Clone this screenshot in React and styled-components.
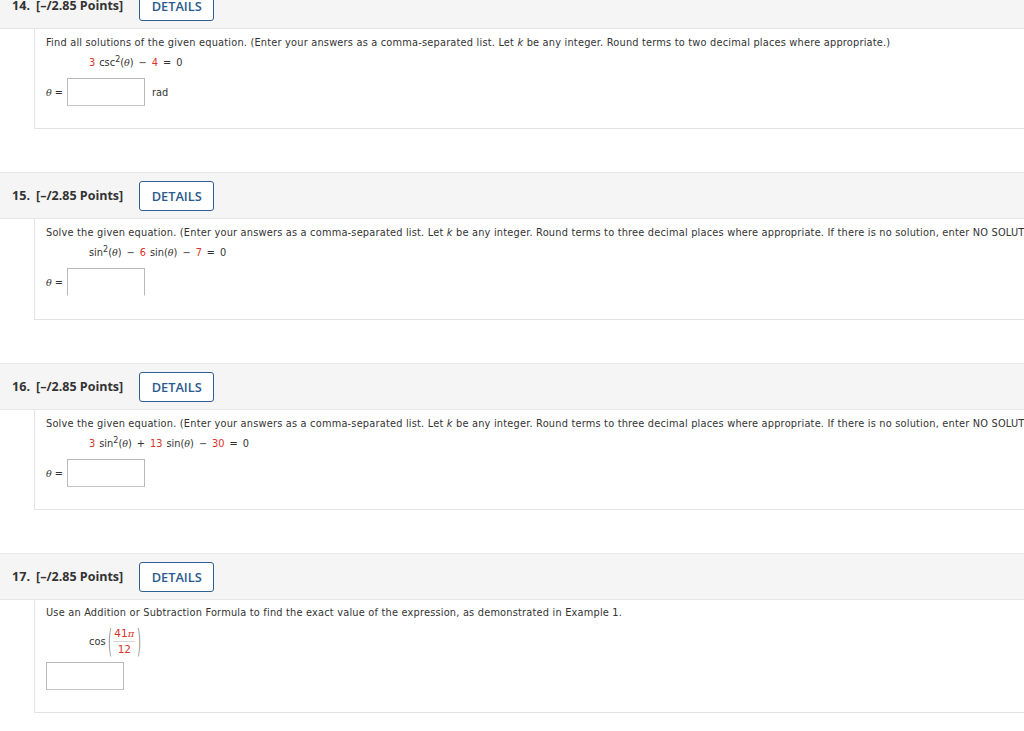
import React from 'react'
import styled, { createGlobalStyle } from 'styled-components'

const GlobalStyle = createGlobalStyle`
  html, body {
    margin: 0;
    padding: 0;
    background: #fff;
    overflow: hidden;
  }
  body {
    font-family: "DejaVu Sans", Verdana, sans-serif;
    color: #333;
  }
`

const Page = styled.div`
  margin-top: -18px;
  width: 1024px;
  overflow: hidden;
`
const Question = styled.section`
  margin-bottom: 43px;
`
const Header = styled.div`
  display: flex;
  align-items: center;
  height: 45px;
  padding-left: 12px;
  background: #f5f5f5;
  border-top: 1px solid #e8e8e8;
  border-bottom: 1px solid #e6e6e6;
  font-family: "Open Sans", sans-serif;
`
const Number = styled.span`
  font-weight: 700;
  font-size: 12.6px;
  color: #333;
`
const Points = styled.span`
  margin-left: 6px;
  font-weight: 700;
  font-size: 12.5px;
  color: #333;
`
const DetailsButton = styled.button`
  margin-left: 16px;
  width: 75px;
  height: 30px;
  padding: 0;
  background: #fff;
  border: 1.5px solid #2f5f92;
  border-radius: 3px;
  font-family: "Open Sans", sans-serif;
  font-weight: 600;
  font-size: 12.8px;
  color: #2a5a8d;
  cursor: pointer;
`
const Body = styled.div`
  margin-left: 34px;
  padding: ${(p) => p.$top || 7}px 0 ${(p) => p.$bottom}px 11px;
  border-left: 1px solid #e3e3e3;
  border-bottom: 1px solid #e3e3e3;
  overflow: hidden;
`
const Prompt = styled.div`
  font-size: 9.8px;
  letter-spacing: 0.2px;
  line-height: 14px;
  white-space: nowrap;
`
const Var = styled.i`
  font-family: "DejaVu Serif", serif;
  font-size: 9.5px;
  letter-spacing: 0;
`
const Equation = styled.div`
  margin-top: ${(p) => p.$top}px;
  padding-left: 43px;
  font-size: 9.8px;
  line-height: 14px;
  white-space: nowrap;
`
const FormulaRow = styled.div`
  display: flex;
  align-items: center;
  margin-top: 7px;
  padding-left: 43px;
  font-size: 9.8px;
`
const Red = styled.span`
  color: #d9332b;
`
const Sup = styled.sup`
  font-size: 8px;
  line-height: 0;
  vertical-align: 4px;
`
const Gap = styled.span`
  display: inline-block;
  width: ${(p) => p.$w || 4}px;
`
const AnswerRow = styled.div`
  display: flex;
  align-items: center;
  margin-top: ${(p) => p.$top}px;
  font-size: 9.8px;
`
const Label = styled.span`
  width: 21px;
`
const AnswerInput = styled.input`
  box-sizing: border-box;
  width: 78px;
  height: 28px;
  margin: 0;
  border: 1px solid #b8b8b8;
  border-bottom-color: ${(p) => (p.$open ? 'transparent' : '#c4c4c4')};
  background: #fff;
  outline: none;
`
const Unit = styled.span`
  margin-left: 7px;
`
const Paren = styled.span`
  display: inline-block;
  margin: 0 1px;
  font-family: "DejaVu Sans", sans-serif;
  font-size: 15px;
  font-weight: 300;
  color: #444;
  transform: scale(0.75, 2.1);
`
const Fraction = styled.span`
  display: inline-flex;
  flex-direction: column;
  align-items: center;
  color: #d9332b;
  font-size: 10.5px;
  line-height: 13px;
`
const FractionTop = styled.span`
  padding: 0 1px 1px;
  border-bottom: 1px solid #d6d6d6;
`
const FractionBottom = styled.span`
  padding-top: 1px;
`
const Pi = styled.i`
  font-family: "DejaVu Serif", serif;
  font-size: 10px;
`

const Theta = () => <Var>θ</Var>

const QuestionHeader = ({ number }) => (
  <Header>
    <Number>{number}.</Number>
    <Points>[–/2.85 Points]</Points>
    <DetailsButton>DETAILS</DetailsButton>
  </Header>
)

const ThetaAnswer = ({ unit, open }) => (
  <AnswerRow $top={8}>
    <Label>
      <Theta /> =
    </Label>
    <AnswerInput $open={open} />
    {unit && <Unit>{unit}</Unit>}
  </AnswerRow>
)

const App = () => (
  <>
    <GlobalStyle />
    <Page>
      <Question>
        <QuestionHeader number={14} />
        <Body $bottom={22}>
          <Prompt>
            Find all solutions of the given equation. (Enter your answers as a comma-separated list. Let <i>k</i> be
            any integer. Round terms to two decimal places where appropriate.)
          </Prompt>
          <Equation $top={6}>
            <Red>3</Red>
            <Gap />
            csc<Sup>2</Sup>(<Theta />)<Gap $w={5} />−<Gap $w={5} />
            <Red>4</Red>
            <Gap $w={5} />=<Gap $w={5} />0
          </Equation>
          <ThetaAnswer unit="rad" />
        </Body>
      </Question>

      <Question>
        <QuestionHeader number={15} />
        <Body $bottom={23}>
          <Prompt>
            Solve the given equation. (Enter your answers as a comma-separated list. Let <i>k</i> be any integer.
            Round terms to three decimal places where appropriate. If there is no solution, enter NO SOLUTION.)
          </Prompt>
          <Equation $top={6}>
            sin<Sup>2</Sup>(<Theta />)<Gap $w={5} />−<Gap $w={5} />
            <Red>6</Red>
            <Gap />
            sin(<Theta />)<Gap $w={5} />−<Gap $w={5} />
            <Red>7</Red>
            <Gap $w={5} />=<Gap $w={5} />0
          </Equation>
          <ThetaAnswer open />
        </Body>
      </Question>

      <Question>
        <QuestionHeader number={16} />
        <Body $bottom={22}>
          <Prompt>
            Solve the given equation. (Enter your answers as a comma-separated list. Let <i>k</i> be any integer.
            Round terms to three decimal places where appropriate. If there is no solution, enter NO SOLUTION.)
          </Prompt>
          <Equation $top={6}>
            <Red>3</Red>
            <Gap />
            sin<Sup>2</Sup>(<Theta />)<Gap $w={5} />+<Gap $w={5} />
            <Red>13</Red>
            <Gap />
            sin(<Theta />)<Gap $w={5} />−<Gap $w={5} />
            <Red>30</Red>
            <Gap $w={5} />=<Gap $w={5} />0
          </Equation>
          <ThetaAnswer />
        </Body>
      </Question>

      <Question>
        <QuestionHeader number={17} />
        <Body $top={6} $bottom={22}>
          <Prompt>
            Use an Addition or Subtraction Formula to find the exact value of the expression, as demonstrated in
            Example 1.
          </Prompt>
          <FormulaRow>
            cos
            <Paren>(</Paren>
            <Fraction>
              <FractionTop>
                41<Pi>π</Pi>
              </FractionTop>
              <FractionBottom>12</FractionBottom>
            </Fraction>
            <Paren>)</Paren>
          </FormulaRow>
          <AnswerRow $top={6}>
            <AnswerInput />
          </AnswerRow>
        </Body>
      </Question>
    </Page>
  </>
)

export default App
